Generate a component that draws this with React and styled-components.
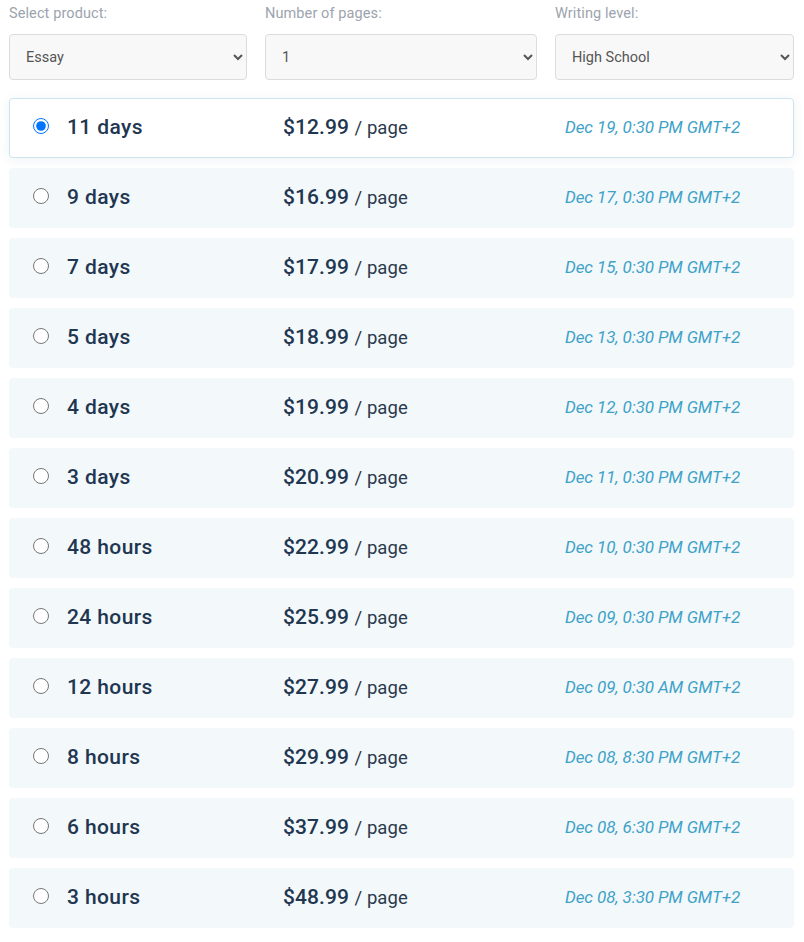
import React, { useState } from 'react'
import styled, { createGlobalStyle } from 'styled-components'

const GlobalStyle = createGlobalStyle`
  body {
    margin: 0;
    background: #ffffff;
    font-family: Roboto, "Liberation Sans", Arial, sans-serif;
  }
`

const Wrapper = styled.div`
  padding: 4px 10px 14px 9px;
`

const Filters = styled.div`
  display: grid;
  grid-template-columns: 238px 272px 1fr;
  column-gap: 18px;
  margin-bottom: 18px;
`

const Field = styled.label`
  display: flex;
  flex-direction: column;
`

const FieldLabel = styled.span`
  font-size: 14.5px;
  line-height: 20px;
  letter-spacing: 0.1px;
  color: #9ca3ae;
  margin-bottom: 10px;
`

const Select = styled.select`
  height: 46px;
  padding: 0 8px 0 12px;
  font-family: Roboto, "Liberation Sans", Arial, sans-serif;
  font-size: 14.5px;
  color: #555555;
  background: #f8f8f8;
  border: 1px solid #dcdcdc;
  border-radius: 4px;
  outline: none;
`

const List = styled.div`
  display: flex;
  flex-direction: column;
  gap: 10px;
`

const Row = styled.label`
  display: grid;
  grid-template-columns: 34px 216px 282px 1fr;
  align-items: center;
  height: 60px;
  box-sizing: border-box;
  padding-left: 23px;
  border-radius: 4px;
  border: 1px solid ${p => (p.$active ? '#cde4ef' : 'transparent')};
  background: ${p => (p.$active ? '#ffffff' : '#f3f8fb')};
  box-shadow: ${p => (p.$active ? '0 2px 12px rgba(40, 80, 110, 0.08)' : 'none')};
  cursor: pointer;
`

const Radio = styled.input`
  width: 16px;
  height: 16px;
  margin: -4px 0 0 0;
  accent-color: #0075ff;
`

const Term = styled.span`
  font-size: 21px;
  font-weight: 500;
  letter-spacing: 0.4px;
  color: #213650;
  margin-top: -2px;
`

const Price = styled.span`
  font-size: 21px;
  font-weight: 500;
  letter-spacing: 0.1px;
  color: #213650;
  margin-top: -2px;
`

const PerPage = styled.span`
  font-size: 18.5px;
  font-weight: 400;
  letter-spacing: 0.1px;
  color: #2a3a4c;
`

const Deadline = styled.span`
  font-size: 17px;
  font-style: italic;
  letter-spacing: -0.1px;
  color: #3ea2c8;
  margin-top: -2px;
`

const options = [
  { term: '11 days', price: '$12.99', date: 'Dec 19, 0:30 PM GMT+2' },
  { term: '9 days', price: '$16.99', date: 'Dec 17, 0:30 PM GMT+2' },
  { term: '7 days', price: '$17.99', date: 'Dec 15, 0:30 PM GMT+2' },
  { term: '5 days', price: '$18.99', date: 'Dec 13, 0:30 PM GMT+2' },
  { term: '4 days', price: '$19.99', date: 'Dec 12, 0:30 PM GMT+2' },
  { term: '3 days', price: '$20.99', date: 'Dec 11, 0:30 PM GMT+2' },
  { term: '48 hours', price: '$22.99', date: 'Dec 10, 0:30 PM GMT+2' },
  { term: '24 hours', price: '$25.99', date: 'Dec 09, 0:30 PM GMT+2' },
  { term: '12 hours', price: '$27.99', date: 'Dec 09, 0:30 AM GMT+2' },
  { term: '8 hours', price: '$29.99', date: 'Dec 08, 8:30 PM GMT+2' },
  { term: '6 hours', price: '$37.99', date: 'Dec 08, 6:30 PM GMT+2' },
  { term: '3 hours', price: '$48.99', date: 'Dec 08, 3:30 PM GMT+2' },
]

const App = () => {
  const [selected, setSelected] = useState(0)

  return (
    <Wrapper>
      <GlobalStyle />
      <Filters>
        <Field>
          <FieldLabel>Select product:</FieldLabel>
          <Select defaultValue="essay">
            <option value="essay">Essay</option>
            <option value="research">Research paper</option>
          </Select>
        </Field>
        <Field>
          <FieldLabel>Number of pages:</FieldLabel>
          <Select defaultValue="1">
            <option value="1">1</option>
            <option value="2">2</option>
            <option value="3">3</option>
          </Select>
        </Field>
        <Field>
          <FieldLabel>Writing level:</FieldLabel>
          <Select defaultValue="hs">
            <option value="hs">High School</option>
            <option value="college">College</option>
          </Select>
        </Field>
      </Filters>
      <List>
        {options.map((o, i) => (
          <Row key={o.term} $active={selected === i}>
            <Radio
              type="radio"
              name="deadline"
              checked={selected === i}
              onChange={() => setSelected(i)}
            />
            <Term>{o.term}</Term>
            <Price>
              {o.price} <PerPage>/ page</PerPage>
            </Price>
            <Deadline>{o.date}</Deadline>
          </Row>
        ))}
      </List>
    </Wrapper>
  )
}

export default App
